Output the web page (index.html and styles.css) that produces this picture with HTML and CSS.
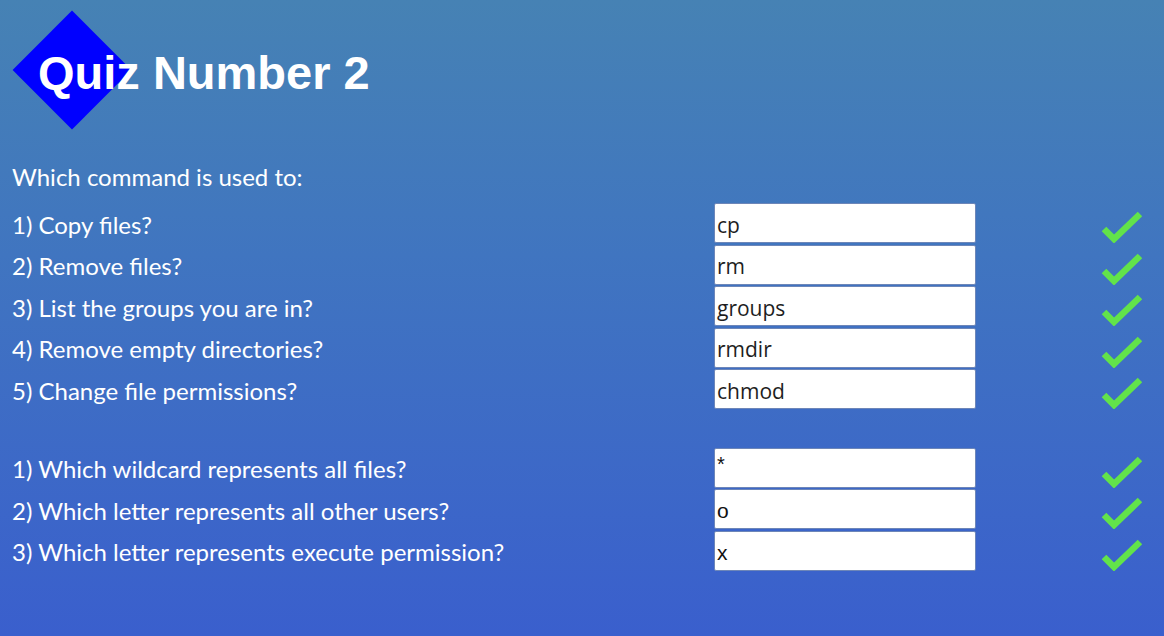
FILE: index.html
```html
<!DOCTYPE html>
<html>
<head>
<meta charset="utf-8">
<link rel="stylesheet" href="styles.css">
</head>
<body>
<header class="header">
  <div class="diamond"></div>
  <h1 class="title">Quiz Number 2</h1>
</header>
<p class="intro">Which command is used to:</p>
<div class="group">
  <div class="row"><span class="q">1) Copy files?</span><div class="answer cmd">cp</div><svg class="check" viewBox="0 0 44 36"><path d="M6 22 L16 32 L42 7"/></svg></div>
  <div class="row"><span class="q">2) Remove files?</span><div class="answer cmd">rm</div><svg class="check" viewBox="0 0 44 36"><path d="M6 22 L16 32 L42 7"/></svg></div>
  <div class="row"><span class="q">3) List the groups you are in?</span><div class="answer cmd">groups</div><svg class="check" viewBox="0 0 44 36"><path d="M6 22 L16 32 L42 7"/></svg></div>
  <div class="row"><span class="q">4) Remove empty directories?</span><div class="answer cmd">rmdir</div><svg class="check" viewBox="0 0 44 36"><path d="M6 22 L16 32 L42 7"/></svg></div>
  <div class="row"><span class="q">5) Change file permissions?</span><div class="answer cmd">chmod</div><svg class="check" viewBox="0 0 44 36"><path d="M6 22 L16 32 L42 7"/></svg></div>
</div>
<div class="group group2">
  <div class="row"><span class="q">1) Which wildcard represents all files?</span><div class="answer sym star">*</div><svg class="check" viewBox="0 0 44 36"><path d="M6 22 L16 32 L42 7"/></svg></div>
  <div class="row"><span class="q">2) Which letter represents all other users?</span><div class="answer sym">o</div><svg class="check" viewBox="0 0 44 36"><path d="M6 22 L16 32 L42 7"/></svg></div>
  <div class="row"><span class="q">3) Which letter represents execute permission?</span><div class="answer sym">x</div><svg class="check" viewBox="0 0 44 36"><path d="M6 22 L16 32 L42 7"/></svg></div>
</div>
</body>
</html>
```
FILE: styles.css
```css
html, body {
  margin: 0;
  height: 100%;
}
body {
  width: 1164px;
  height: 636px;
  overflow: hidden;
  background: linear-gradient(to bottom, #4682b4 0%, #4075c0 40%, #3a5fcd 100%);
  font-family: Lato, "Open Sans", sans-serif;
  color: #fff;
  padding-left: 12px;
  box-sizing: border-box;
}
.header {
  position: relative;
  height: 140px;
  display: flex;
  align-items: flex-start;
}
.diamond {
  position: absolute;
  left: 18px;
  top: 28px;
  width: 84px;
  height: 84px;
  background: #0000ff;
  transform: rotate(45deg);
  transform-origin: center;
}
.title {
  position: relative;
  margin: 46px 0 0 26px;
  font-family: "Liberation Sans", Arial, sans-serif;
  font-weight: bold;
  font-size: 47px;
  line-height: 54px;
  color: #fff;
}
.intro {
  margin: 22px 0 0;
  font-size: 24px;
  line-height: 30px;
  height: 30px;
}
.group {
  margin-top: 11px;
  display: grid;
  grid-template-columns: 702px 262px 124px 44px;
  grid-auto-rows: 41.5px;
}
.group2 {
  margin-top: 37px;
}
.row {
  display: contents;
}
.q {
  align-self: center;
  font-size: 24px;
  line-height: 28px;
  padding-top: 2px;
}
.answer {
  height: 40px;
  box-sizing: border-box;
  background: #fff;
  border: 1px solid #6d86b8;
  border-radius: 2px;
  padding-left: 2px;
  display: flex;
  align-items: center;
  color: #1e1e1e;
}
.cmd {
  font-family: "Open Sans", sans-serif;
  font-size: 21px;
  padding-top: 3px;
}
.sym {
  font-family: "Liberation Sans", Arial, sans-serif;
  font-size: 21px;
  padding-top: 4px;
  color: #111;
}
.star {
  align-items: flex-start;
  padding-top: 4px;
  font-size: 20px;
}
.check {
  grid-column: 4;
  width: 44px;
  height: 36px;
  align-self: center;
  margin-left: -2px;
  margin-top: 3px;
}
.check path {
  fill: none;
  stroke: #62e34a;
  stroke-width: 6.5;
  stroke-linecap: butt;
  stroke-linejoin: miter;
}
```
